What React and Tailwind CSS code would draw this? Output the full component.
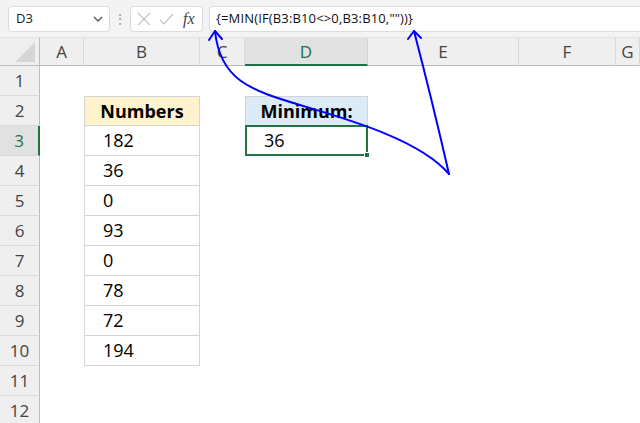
import React from 'react';

const cols = [
  { key: 'A', w: 44 },
  { key: 'B', w: 116 },
  { key: 'C', w: 45 },
  { key: 'D', w: 123 },
  { key: 'E', w: 151 },
  { key: 'F', w: 97 },
  { key: 'G', w: 24 },
];

const numbers = [182, 36, 0, 93, 0, 78, 72, 194];

function cellContent(row, col) {
  if (col === 'B' && row === 2) {
    return <div className="h-full bg-[#fff2cc] border border-[#d4d4d4] flex items-center justify-center font-bold">Numbers</div>;
  }
  if (col === 'B' && row >= 3 && row <= 10) {
    return <div className="h-full border-x border-b border-[#d4d4d4] flex items-center pl-[18px]">{numbers[row - 3]}</div>;
  }
  if (col === 'D' && row === 2) {
    return <div className="h-full bg-[#ddebf7] border border-[#d4d4d4] flex items-center justify-center font-bold">Minimum:</div>;
  }
  if (col === 'D' && row === 3) {
    return (
      <div className="h-[31px] -mt-px border-2 border-[#217346] flex items-center pl-[17px] relative">
        36
        <span className="absolute -right-[4px] -bottom-[4px] w-[6px] h-[6px] bg-[#217346] border border-white" />
      </div>
    );
  }
  return null;
}

function Arrows() {
  return (
    <svg className="absolute inset-0 pointer-events-none" width="640" height="423" viewBox="0 0 640 423">
      <g fill="none" stroke="#0000ff" strokeWidth="2" strokeLinecap="round" strokeLinejoin="round">
        <path d="M215,31 C220,80 250,90 300,105 S420,140 449,174" />
        <path d="M449,174 Q432,100 414,31" />
        <path d="M209,40 L215,31 L222,39" />
        <path d="M408,39 L414,31 L421,38" />
      </g>
    </svg>
  );
}

export default function App() {
  return (
    <div className="relative w-[640px] h-[423px] overflow-hidden bg-white font-['Open_Sans',sans-serif] text-black">
      {/* Toolbar */}
      <div className="h-[38px] bg-[#f3f3f3] flex items-center pt-[1px] border-b border-[#e2e2e2]">
        <div className="ml-[8px] w-[102px] h-[26px] bg-white border border-[#dcdcdc] rounded-[4px] flex items-center justify-between pl-[7px] pr-[5px] text-[13px] text-[#222]">
          <span>D3</span>
          <svg width="12" height="12" viewBox="0 0 12 12" fill="none" stroke="#555" strokeWidth="1.3">
            <path d="M2,4 L6,8 L10,4" />
          </svg>
        </div>
        <div className="w-[20px] flex justify-center text-[#9a9a9a] text-[14px] leading-none">⋮</div>
        <div className="w-[73px] h-[26px] bg-white border border-[#dcdcdc] rounded-[4px] flex items-center gap-[8px] pl-[6px]">
          <svg width="14" height="14" viewBox="0 0 14 14" stroke="#c4c4c4" strokeWidth="1.2">
            <path d="M1,1 L13,13 M13,1 L1,13" />
          </svg>
          <svg width="15" height="14" viewBox="0 0 15 14" fill="none" stroke="#c4c4c4" strokeWidth="1.2">
            <path d="M1,8 L5,12 L14,2" />
          </svg>
          <span className="font-['Liberation_Serif',serif] italic text-[16px] text-[#444] leading-none ml-[1px]">fx</span>
        </div>
        <div className="ml-[6px] flex-1 h-[26px] bg-white border-y border-l border-[#dcdcdc] rounded-l-[4px] flex items-center pl-[6px] text-[13px] tracking-[0.15px] text-[#111]">
          {'{=MIN(IF(B3:B10<>0,B3:B10,""))}'}
        </div>
      </div>

      {/* Sheet */}
      <div className="grid grid-cols-[40px_44px_116px_45px_123px_151px_97px_24px] grid-rows-[28px_repeat(12,30px)] text-[18px]">
        {/* corner */}
        <div className="bg-[#efefef] border-r border-b border-[#bdbdbd] relative">
          <svg className="absolute right-[4px] bottom-[3px]" width="20" height="20" viewBox="0 0 20 20">
            <path d="M20,0 L20,20 L0,20 Z" fill="#d6d6d6" />
          </svg>
        </div>
        {cols.map((c) =>
          c.key === 'D' ? (
            <div key={c.key} className="bg-[#e1e1e1] border-b-2 border-[#217346] border-r border-r-[#d4d4d4] flex items-center justify-center text-[#217346] text-[17px] pt-[2px]">
              {c.key}
            </div>
          ) : (
            <div key={c.key} className="bg-[#efefef] border-b border-[#bdbdbd] border-r border-r-[#d8d8d8] flex items-center justify-center text-[#444] text-[17px]">
              {c.key}
            </div>
          )
        )}
        {Array.from({ length: 12 }, (_, i) => i + 1).map((row) => (
          <React.Fragment key={row}>
            {row === 3 ? (
              <div className="bg-[#e1e1e1] border-r-2 border-[#217346] border-b border-b-[#d8d8d8] flex items-center justify-center text-[#217346] text-[17px]">
                {row}
              </div>
            ) : (
              <div className="bg-[#efefef] border-r border-[#bdbdbd] border-b border-b-[#d8d8d8] flex items-center justify-center text-[#444] text-[17px]">
                {row}
              </div>
            )}
            {cols.map((c) => (
              <div key={c.key}>{cellContent(row, c.key)}</div>
            ))}
          </React.Fragment>
        ))}
      </div>

      <Arrows />
    </div>
  );
}
